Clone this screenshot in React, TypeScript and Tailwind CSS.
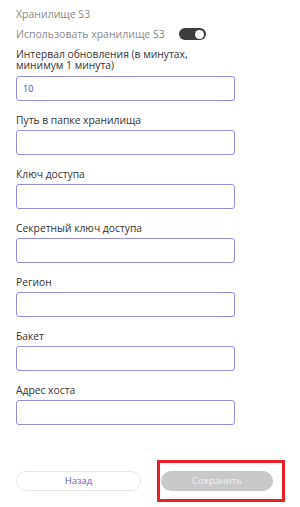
import { useState } from 'react';

const fields = [
  { label: 'Путь в папке хранилища', value: '' },
  { label: 'Ключ доступа', value: '' },
  { label: 'Секретный ключ доступа', value: '' },
  { label: 'Регион', value: '' },
  { label: 'Бакет', value: '' },
  { label: 'Адрес хоста', value: '' },
];

function Field({ label, value }: { label: string; value: string }) {
  return (
    <div className="mt-[12px]">
      <div className="text-[10.3px] leading-[14px] text-[#333333]">{label}</div>
      <input
        defaultValue={value}
        className="mt-[3px] block w-[219px] h-[25px] rounded-[3px] border-[1.5px] border-[#948fe3] px-[6px] text-[9px] text-[#4a4a9a] outline-none"
      />
    </div>
  );
}

export default function App() {
  const [useS3, setUseS3] = useState(true);

  return (
    <div className="relative w-[300px] h-[507px] bg-white px-4 pt-[7px] font-['Open_Sans',sans-serif]">
      {/* Section title */}
      <div className="text-[10.5px] leading-[14px] text-[#8a8a8a]">Хранилище S3</div>

      {/* Toggle row */}
      <div className="mt-[6px] flex items-center h-[14px]">
        <span className="text-[10.5px] leading-[14px] text-[#8a8a8a]">Использовать хранилище S3</span>
        <button
          onClick={() => setUseS3(!useS3)}
          className={`ml-[14px] flex items-center w-[27px] h-[12px] rounded-full px-[1.5px] ${useS3 ? 'bg-[#3c3c3c] justify-end' : 'bg-[#c8c8c8] justify-start'}`}
        >
          <span className="block w-[9px] h-[9px] rounded-full bg-white" />
        </button>
      </div>

      {/* Interval */}
      <div className="mt-[8px]">
        <div className="w-[200px] text-[10.3px] leading-[11px] text-[#333333]">
          Интервал обновления (в минутах, минимум 1 минута)
        </div>
        <input
          defaultValue="10"
          className="mt-[5px] block w-[219px] h-[25px] rounded-[3px] border-[1.5px] border-[#948fe3] px-[6px] text-[9px] text-[#4a4a9a] outline-none"
        />
      </div>

      {fields.map(f => (
        <Field key={f.label} label={f.label} value={f.value} />
      ))}

      {/* Actions */}
      <div className="mt-[46px] flex gap-[20px]">
        <button className="w-[125px] h-[20px] rounded-full border border-[#e6e6e6] text-[9.5px] text-[#6a5fd8]">
          Назад
        </button>
        <button disabled className="w-[112px] h-[20px] rounded-full bg-[#c9c9c9] text-[9.5px] text-[#f2f2f2]">
          Сохранить
        </button>
      </div>

      {/* Highlight annotation */}
      <div className="absolute left-[157px] top-[460px] w-[128px] h-[42px] border-[3px] border-[#e8202a] pointer-events-none" />
    </div>
  );
}
